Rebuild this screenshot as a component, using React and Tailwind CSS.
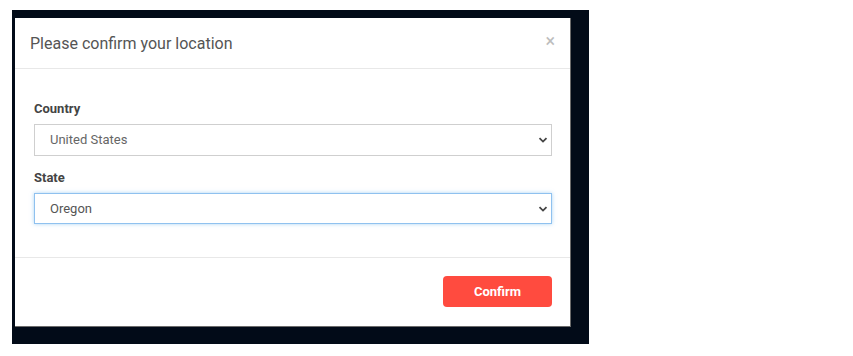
import { useState } from 'react';

const Chevron = () => (
  <svg className="pointer-events-none absolute right-[4px] top-1/2 -translate-y-1/2" width="10" height="10" viewBox="0 0 10 10">
    <path d="M1.5 3.2 L5 6.6 L8.5 3.2" fill="none" stroke="#444" strokeWidth="1.8" />
  </svg>
);

const App = () => {
  const [country, setCountry] = useState('United States');
  const [state, setState] = useState('Oregon');

  return (
    <div className="w-[853px] h-[356px] bg-white pt-[10px] pl-[12px]" style={{ fontFamily: 'Roboto, "Noto Sans", sans-serif' }}>
      {/* backdrop */}
      <div className="w-[577px] h-[334px] bg-[#020b18] pt-[8px] pl-[3px]">
        {/* modal */}
        <div className="w-[556px] h-[309px] bg-white border-r border-b border-[#6b6b6b] flex flex-col">
          {/* header */}
          <div className="h-[51px] flex items-center justify-between pl-[15px] pr-[15px] border-b border-[#e8e8e8]">
            <h2 className="text-[16px] text-[#555] pt-[1px]">Please confirm your location</h2>
            <button className="text-[18px] leading-none text-[#bdbdbd] -mt-[5px]">&times;</button>
          </div>

          {/* body */}
          <div className="pt-[32px] pb-[33px] pl-[19px] pr-[18px] border-b border-[#e8e8e8]">
            <label className="block text-[13px] leading-[16px] font-bold text-[#444] mb-[7px]">Country</label>
            <div className="relative">
              <select
                className="w-full h-[32px] appearance-none bg-white border border-[#cfcfcf] pl-[15px] text-[13px] text-[#666] outline-none"
                value={country}
                onChange={e => setCountry(e.target.value)}
              >
                <option>United States</option>
                <option>Canada</option>
              </select>
              <Chevron />
            </div>

            <label className="block text-[13px] leading-[16px] font-bold text-[#444] mt-[14px] mb-[7px]">State</label>
            <div className="relative">
              <select
                className="w-full h-[31px] appearance-none bg-white border border-[#8fc1ef] shadow-[0_0_4px_rgba(102,175,233,0.55)] pl-[15px] text-[13px] text-[#555] outline-none"
                value={state}
                onChange={e => setState(e.target.value)}
              >
                <option>Oregon</option>
                <option>California</option>
                <option>Washington</option>
              </select>
              <Chevron />
            </div>
          </div>

          {/* footer */}
          <div className="flex justify-end pt-[18px] pr-[18px]">
            <button className="w-[109px] h-[31px] rounded-[4px] bg-[#ff4b3f] text-white text-[13px] font-bold">
              Confirm
            </button>
          </div>
        </div>
      </div>
    </div>
  );
};

export default App;
